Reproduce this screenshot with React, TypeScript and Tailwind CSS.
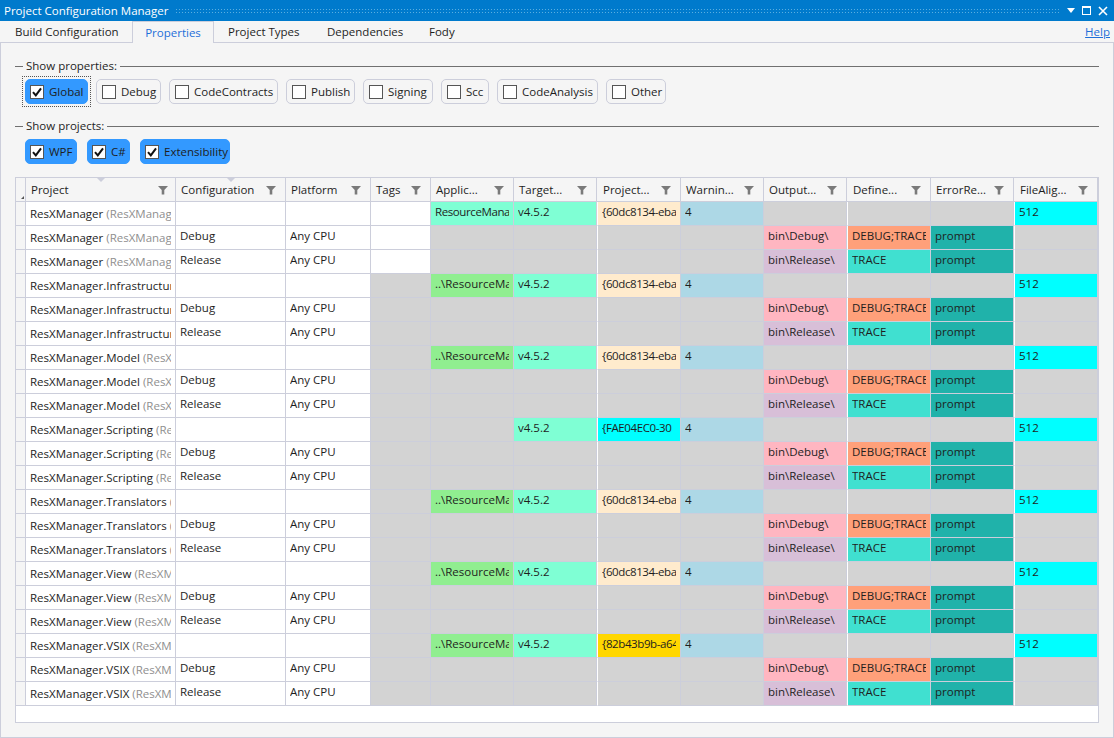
const font = "font-['Open_Sans','Noto_Sans',sans-serif]";

const columns = [
  { title: "Project", width: "w-[150px]", pad: "pl-[5px] pr-[7px]" },
  { title: "Configuration", width: "w-[110px]", pad: "pl-[5px] pr-[9px]" },
  { title: "Platform", width: "w-[85px]", pad: "pl-[5px] pr-[9px]" },
  { title: "Tags", width: "w-[60px]", pad: "pl-[5px] pr-[9px]" },
  { title: "Applic...", width: "w-[83px]", pad: "pl-[5px] pr-[9px]" },
  { title: "Target...", width: "w-[83px]", pad: "pl-[5px] pr-[9px]" },
  { title: "Project...", width: "w-[84px]", pad: "pl-[6px] pr-[9px]" },
  { title: "Warnin...", width: "w-[83px]", pad: "pl-[5px] pr-[9px]" },
  { title: "Output...", width: "w-[83px]", pad: "pl-[5px] pr-[9px]" },
  { title: "Define...", width: "w-[84px]", pad: "pl-[6px] pr-[9px]" },
  { title: "ErrorRe...", width: "w-[83px]", pad: "pl-[5px] pr-[9px]" },
  { title: "FileAlig...", width: "w-[84px]", pad: "pl-[6px] pr-[9px]" },
];

const projects = [
  { name: "ResXManager", suffix: "(ResXManager)", app: "ResourceManager", guid: "{60dc8134-eba5", guidBg: "bg-[#ffebcd]", tags: true },
  { name: "ResXManager.Infrastructure", suffix: "(ResXManager)", app: "..\\ResourceManager", guid: "{60dc8134-eba5", guidBg: "bg-[#ffebcd]" },
  { name: "ResXManager.Model", suffix: "(ResXManager)", app: "..\\ResourceManager", guid: "{60dc8134-eba5", guidBg: "bg-[#ffebcd]" },
  { name: "ResXManager.Scripting", suffix: "(ResXManager)", app: "", guid: "{FAE04EC0-30", guidBg: "bg-[#00ffff]" },
  { name: "ResXManager.Translators", suffix: "(ResXManager)", app: "..\\ResourceManager", guid: "{60dc8134-eba5", guidBg: "bg-[#ffebcd]" },
  { name: "ResXManager.View", suffix: "(ResXManager)", app: "..\\ResourceManager", guid: "{60dc8134-eba5", guidBg: "bg-[#ffebcd]" },
  { name: "ResXManager.VSIX", suffix: "(ResXManager)", app: "..\\ResourceManager", guid: "{82b43b9b-a64c", guidBg: "bg-[#ffd700]" },
];

const gray = "bg-[#d3d3d3]";

function Check({ label, width, on, focus }: { label: string; width: string; on?: boolean; focus?: boolean }) {
  return (
    <div className={`p-[2px] border border-dotted ${focus ? "border-[#555]" : "border-transparent"}`}>
      <div
        className={`${width} h-[25px] flex items-center gap-[5px] rounded-[5px] border ${
          on ? "bg-[#3399ff] border-[#3399ff] pl-[4px]" : "border-[#cccedb] pl-[5px]"
        }`}
      >
        <span className="w-[14px] h-[14px] bg-white border border-[#555] flex items-center justify-center shrink-0">
          {on && (
            <svg width="12" height="12" viewBox="0 0 12 12">
              <path d="M2 6.2 L4.8 9.4 L10 2.4" fill="none" stroke="#111" strokeWidth="2" />
            </svg>
          )}
        </span>
        <span className="text-[#1e1e1e] whitespace-nowrap">{label}</span>
      </div>
    </div>
  );
}

function Legend({ title }: { title: string }) {
  return (
    <div className="flex items-center h-[16px] px-[14px]">
      <div className="w-[8px] h-px bg-[#707070]" />
      <span className="px-[3px] text-[#1e1e1e] whitespace-nowrap">{title}</span>
      <div className="flex-1 h-px bg-[#707070]" />
    </div>
  );
}

function Cell({ width, bg, text, gap, tight }: { width: string; bg: string; text?: string; gap?: boolean; tight?: boolean }) {
  return (
    <div className={`${width} shrink-0 h-[24px] border-r border-b border-[#cccedb] ${gap ? "border-l border-l-white" : ""} ${bg} pl-[4px] pr-[4px] pt-[1px]`}>
      <div className={`overflow-hidden whitespace-nowrap text-[#1e1e1e] ${tight ? "tracking-[-0.4px]" : ""}`}>{text}</div>
    </div>
  );
}

function Row({ project, config }: { project: (typeof projects)[number]; config: string }) {
  const isGlobal = config === "";
  const isDebug = config === "Debug";
  return (
    <div className="flex">
      <div className="w-[10px] shrink-0 h-[24px] bg-[#f5f5f5] border-r border-b border-[#cccedb]" />
      <div className="w-[150px] shrink-0 h-[24px] border-r border-b border-[#cccedb] bg-white px-[4px] pt-[3px]">
        <div className="overflow-hidden whitespace-nowrap text-[#1e1e1e]">
          {project.name} <span className="text-[#8f8f8f]">{project.suffix}</span>
        </div>
      </div>
      <Cell width="w-[110px]" bg="bg-white" text={config} />
      <Cell width="w-[85px]" bg="bg-white" text={isGlobal ? "" : "Any CPU"} />
      <Cell width="w-[60px]" bg={project.tags ? "bg-white" : gray} />
      <Cell
        width="w-[83px]"
        tight={project.tags}
        bg={isGlobal && project.app ? (project.tags ? "bg-[#7fffd4]" : "bg-[#90ee90]") : gray}
        text={isGlobal ? project.app : ""}
      />
      <Cell width="w-[83px]" bg={isGlobal ? "bg-[#7fffd4]" : gray} text={isGlobal ? "v4.5.2" : ""} />
      <Cell width="w-[84px]" gap tight bg={isGlobal ? project.guidBg : gray} text={isGlobal ? project.guid : ""} />
      <Cell width="w-[83px]" bg={isGlobal ? "bg-[#add8e6]" : gray} text={isGlobal ? "4" : ""} />
      <Cell
        width="w-[83px]"
        bg={isGlobal ? gray : isDebug ? "bg-[#ffb6c1]" : "bg-[#d8bfd8]"}
        text={isGlobal ? "" : isDebug ? "bin\\Debug\\" : "bin\\Release\\"}
      />
      <Cell
        width="w-[84px]"
        gap
        bg={isGlobal ? gray : isDebug ? "bg-[#ffa07a]" : "bg-[#40e0d0]"}
        text={isGlobal ? "" : isDebug ? "DEBUG;TRACE" : "TRACE"}
      />
      <Cell width="w-[83px]" bg={isGlobal ? gray : "bg-[#20b2aa]"} text={isGlobal ? "" : "prompt"} />
      <Cell width="w-[84px]" gap bg={isGlobal ? "bg-[#00ffff]" : gray} text={isGlobal ? "512" : ""} />
    </div>
  );
}

export default function App() {
  return (
    <div className={`${font} text-[11.5px] w-[1114px] h-[738px] overflow-hidden bg-[#f5f5f5] flex flex-col`}>
      {/* Title bar */}
      <div className="h-[21px] shrink-0 bg-[#007acc] flex items-center pl-[4px] pr-[6px] text-white">
        <span className="whitespace-nowrap">Project Configuration Manager</span>
        <div className="flex-1 ml-[7px] mr-[7px] h-[5px] bg-[radial-gradient(#5aaee0_1px,transparent_1px)] bg-[length:3px_3px]" />
        <svg width="8" height="5" viewBox="0 0 8 5">
          <path d="M0 0 H8 L4 5 Z" fill="white" />
        </svg>
        <span className="ml-[7px] w-[9px] h-[9px] border border-t-2 border-white" />
        <svg className="ml-[7px]" width="10" height="10" viewBox="0 0 10 10">
          <path d="M1 1 L9 9 M9 1 L1 9" stroke="white" strokeWidth="1.6" />
        </svg>
      </div>

      {/* Tabs */}
      <div className="h-[22px] shrink-0 flex items-end border-b border-[#cccedb] text-[#1e1e1e]">
        <div className="w-[132px] pl-[15px] h-[21px] flex items-center">Build Configuration</div>
        <div className="w-[82px] h-[22px] flex items-center justify-center text-[#1e6fd9] border-x border-t border-[#cccedb] bg-[#f5f5f5] -mb-px">Properties</div>
        <div className="w-[99px] pl-[14px] h-[21px] flex items-center">Project Types</div>
        <div className="w-[102px] pl-[14px] h-[21px] flex items-center">Dependencies</div>
        <div className="pl-[14px] h-[21px] flex items-center">Fody</div>
        <a className="ml-auto mr-[4px] h-[21px] flex items-center text-[#1e6fd9] underline">Help</a>
      </div>

      {/* Tab content */}
      <div className="flex-1 border-x border-b border-[#cccedb] pt-[15px] flex flex-col">
        <Legend title="Show properties:" />
        <div className="flex gap-[2px] pl-[21px] mt-[2px]">
          <Check label="Global" width="w-[63px]" on focus />
          <Check label="Debug" width="w-[65px]" />
          <Check label="CodeContracts" width="w-[109px]" />
          <Check label="Publish" width="w-[69px]" />
          <Check label="Signing" width="w-[70px]" />
          <Check label="Scc" width="w-[48px]" />
          <Check label="CodeAnalysis" width="w-[101px]" />
          <Check label="Other" width="w-[60px]" />
        </div>
        <div className="mt-[11px]">
          <Legend title="Show projects:" />
        </div>
        <div className="flex gap-[4px] pl-[21px] mt-[2px]">
          <Check label="WPF" width="w-[52px]" on />
          <Check label="C#" width="w-[43px]" on />
          <Check label="Extensibility" width="w-[90px]" on />
        </div>

        {/* Grid */}
        <div className="ml-[14px] mr-[14px] mt-[10px] h-[546px] border border-[#cccedb] bg-white">
          <div className="flex h-[24px]">
            <div className="w-[10px] shrink-0 border-r border-b border-[#cccedb] bg-[#f5f5f5] relative">
              <span className="absolute right-[1px] bottom-[2px] w-0 h-0 border-l-[3px] border-l-transparent border-b-[3px] border-b-[#555]" />
            </div>
            {columns.map((c, i) => (
              <div
                key={c.title + i}
                className={`${c.width} ${c.pad} shrink-0 relative border-r border-b border-[#cccedb] bg-[#f5f5f5] flex items-center justify-between text-[#1e1e1e] whitespace-nowrap`}
              >
                {i < 2 && (
                  <span className="absolute left-1/2 top-0 -translate-x-1/2 w-0 h-0 border-x-[4px] border-x-transparent border-t-[4px] border-t-[#cccedb]" />
                )}
                <span>{c.title}</span>
                <svg width="10" height="10" viewBox="0 0 10 10" className="shrink-0">
                  <path d="M0 1 H10 L6.3 5 V9.5 H3.7 V5 Z" fill="#7a7a7a" />
                </svg>
              </div>
            ))}
          </div>
          {projects.map((p) => (
            <div key={p.name}>
              <Row project={p} config="" />
              <Row project={p} config="Debug" />
              <Row project={p} config="Release" />
            </div>
          ))}
        </div>
      </div>
    </div>
  );
}
